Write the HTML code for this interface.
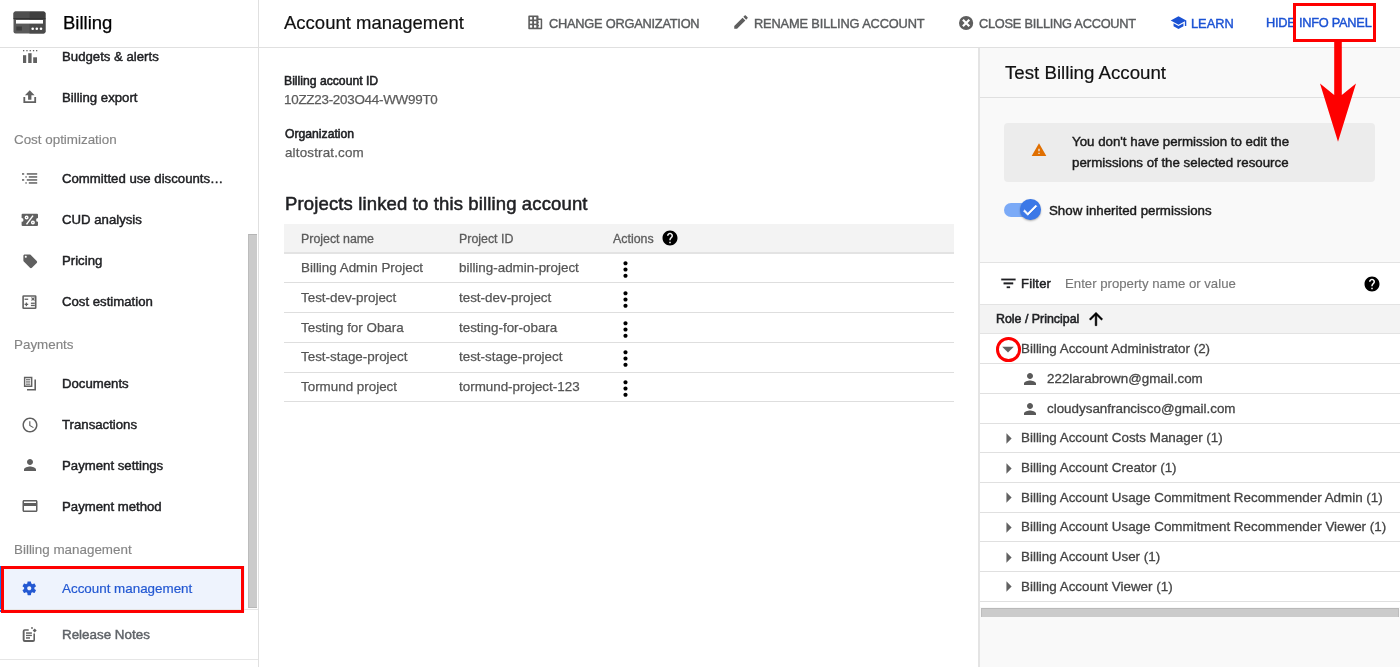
<!DOCTYPE html>
<html><head><meta charset="utf-8"><title>Billing - Account management</title>
<style>
html,body{margin:0;padding:0;}
body{width:1400px;height:667px;position:relative;overflow:hidden;background:#fff;font-family:"Liberation Sans",sans-serif;}
.t{position:absolute;white-space:nowrap;line-height:20px;-webkit-text-stroke:0.45px;will-change:transform;}
.r{position:absolute;}
.i{position:absolute;display:block;}
</style></head><body>
<div class="r" style="left:0px;top:47px;width:1400px;height:1px;background:#e0e0e0;"></div>
<div class="r" style="left:258px;top:0px;width:1px;height:667px;background:#e0e0e0;"></div>
<div class="r" style="left:979px;top:48px;width:421px;height:619px;background:#f9f9f9;"></div>
<div class="r" style="left:978px;top:48px;width:2px;height:619px;background:#e4e4e4;"></div>
<div class="r" style="left:980px;top:97px;width:420px;height:1px;background:#e0e0e0;"></div>
<svg class="i" style="left:13px;top:11px;width:33px;height:23px" viewBox="0 0 33 23">
<rect x="0.5" y="0.5" width="32" height="22" rx="2" fill="#5a5a5a"/>
<path d="M0.5 2.5a2 2 0 0 1 2-2H16.5V7.5H0.5z" fill="#4f4f4f"/>
<path d="M16.5 0.5H30.5a2 2 0 0 1 2 2V7.5H16.5z" fill="#3f3f3f"/>
<path d="M16.5 7.5H32.5V20.5a2 2 0 0 1-2 2H16.5z" fill="#4a4a4a"/>
<rect x="0.5" y="7" width="32" height="1.2" fill="#333"/><rect x="3" y="9" width="27" height="3.6" fill="#fff"/>
<rect x="3.3" y="15.5" width="5.6" height="4" fill="#3c3c3c"/>
<circle cx="19.7" cy="17.8" r="1.3" fill="#fff"/><circle cx="23.8" cy="17.8" r="1.3" fill="#fff"/><circle cx="28" cy="17.8" r="1.3" fill="#fff"/>
</svg>
<div class="t" style="left:63px;top:12.79px;font-size:18.5px;color:#000;font-weight:400;-webkit-text-stroke:0.25px">Billing</div>
<div class="t" style="left:62.0px;top:47.13px;font-size:13.2px;color:#202124;font-weight:400;">Budgets &amp; alerts</div>
<div class="t" style="left:62.0px;top:87.63px;font-size:13.2px;color:#202124;font-weight:400;">Billing export</div>
<div class="t" style="left:62.0px;top:169.13px;font-size:13.2px;color:#202124;font-weight:400;">Committed use discounts…</div>
<div class="t" style="left:62.0px;top:210.13px;font-size:13.2px;color:#202124;font-weight:400;">CUD analysis</div>
<div class="t" style="left:62.0px;top:251.13px;font-size:13.2px;color:#202124;font-weight:400;">Pricing</div>
<div class="t" style="left:62.0px;top:292.13px;font-size:13.2px;color:#202124;font-weight:400;">Cost estimation</div>
<div class="t" style="left:62.0px;top:374.13px;font-size:13.2px;color:#202124;font-weight:400;">Documents</div>
<div class="t" style="left:62.0px;top:415.13px;font-size:13.2px;color:#202124;font-weight:400;">Transactions</div>
<div class="t" style="left:62.0px;top:456.13px;font-size:13.2px;color:#202124;font-weight:400;">Payment settings</div>
<div class="t" style="left:62.0px;top:497.13px;font-size:13.2px;color:#202124;font-weight:400;">Payment method</div>
<div class="t" style="left:13.5px;top:130.46px;font-size:13.4px;color:#858585;font-weight:400;-webkit-text-stroke:0.15px">Cost optimization</div>
<div class="t" style="left:13.5px;top:335.46px;font-size:13.4px;color:#858585;font-weight:400;-webkit-text-stroke:0.15px">Payments</div>
<div class="t" style="left:13.5px;top:540.26px;font-size:13.4px;color:#858585;font-weight:400;-webkit-text-stroke:0.15px">Billing management</div>
<div class="r" style="left:0px;top:566px;width:245px;height:46px;background:#eef3fd;"></div>
<div class="r" style="left:0px;top:566px;width:3px;height:46px;background:#1a73e8;"></div>
<svg class="i" style="left:21.0px;top:579.75px;width:16.5px;height:16.5px;" viewBox="0 0 24 24"><path fill="#2358d2" d="M19.43 12.98c.04-.32.07-.64.07-.98s-.03-.66-.07-.98l2.11-1.65c.19-.15.24-.42.12-.64l-2-3.46c-.12-.22-.39-.3-.61-.22l-2.49 1c-.52-.4-1.08-.73-1.690-.98l-.38-2.65C14.46 2.18 14.25 2 14 2h-4c-.25 0-.46.18-.49.42l-.38 2.65c-.61.25-1.17.59-1.69.98l-2.49-1c-.23-.09-.49 0-.61.22l-2 3.46c-.13.22-.07.49.12.64l2.11 1.650c-.04.32-.07.65-.07.98s.03.66.07.98l-2.11 1.65c-.19.15-.24.42-.12.64l2 3.46c.12.22.39.3.61.22l2.49-1c.52.4 1.08.73 1.69.98l.38 2.65c.03.24.24.42.49.42h4c.25 0 .46-.18.49-.42l.38-2.65c.61-.25 1.17-.59 1.69-.98l2.49 1c.23.09.49 0 .61-.22l2-3.46c.12-.22.07-.49-.12-.64l-2.11-1.65zM12 15c-1.66 0-3-1.34-3-3s1.34-3 3-3 3 1.34 3 3-1.34 3-3 3z"/></svg>
<div class="t" style="left:62.2px;top:578.96px;font-size:13.4px;color:#2358d2;font-weight:400;-webkit-text-stroke:0.2px">Account management</div>
<div class="r" style="left:248px;top:234px;width:9px;height:373.5px;background:#cbcbcb;border-top:1px solid #b5b5b5;border-left:1px solid #bcbcbc;border-bottom:1px solid #b9b9b9;box-sizing:border-box"></div>
<div class="r" style="left:0px;top:609px;width:258px;height:1px;background:#e6e6e6;"></div>
<div class="t" style="left:62px;top:625.36px;font-size:13.4px;color:#5f6368;font-weight:400;">Release Notes</div>
<div class="r" style="left:0px;top:659px;width:258px;height:1px;background:#e6e6e6;"></div>
<svg class="i" style="left:20.7px;top:456.3px;width:18px;height:18px;" viewBox="0 0 24 24"><path fill="#5f5f5f" d="M12 12c2.21 0 4-1.79 4-4s-1.79-4-4-4-4 1.79-4 4 1.79 4 4 4zm0 2c-2.67 0-8 1.34-8 4v2h16v-2c0-2.66-5.33-4-8-4z"/></svg>
<svg class="i" style="left:20.7px;top:415.5px;width:18px;height:18px;" viewBox="0 0 24 24"><path fill="#5f5f5f" d="M11.99 2C6.47 2 2 6.48 2 12s4.47 10 9.99 10C17.52 22 22 17.52 22 12S17.52 2 11.99 2zM12 20c-4.42 0-8-3.58-8-8s3.58-8 8-8 8 3.58 8 8-3.58 8-8 8zm.5-13H11v6l5.25 3.15.75-1.23-4.5-2.67z"/></svg>
<svg class="i" style="left:20.5px;top:497px;width:18px;height:18px;" viewBox="0 0 24 24"><path fill="#5f5f5f" d="M20 4H4c-1.11 0-1.99.89-1.99 2L2 18c0 1.11.89 2 2 2h16c1.11 0 2-.89 2-2V6c0-1.11-.89-2-2-2zm0 14H4v-6h16v6zm0-10H4V6h16v2z"/></svg>
<svg class="i" style="left:21.5px;top:253.3px;width:16.5px;height:16.5px;" viewBox="0 0 24 24"><path fill="#5f5f5f" d="M21.41 11.58l-9-9C12.05 2.22 11.55 2 11 2H4c-1.1 0-2 .9-2 2v7c0 .55.22 1.05.59 1.42l9 9c.36.36.86.58 1.41.58.55 0 1.05-.22 1.41-.59l7-7c.37-.36.59-.86.59-1.410 0-.55-.23-1.06-.59-1.42zM5.5 7C4.67 7 4 6.330 4 5.5S4.67 4 5.5 4 7 4.67 7 5.5 6.33 7 5.5 7z"/></svg>
<svg class="i" style="left:0;top:0;width:260px;height:667px" viewBox="0 0 260 667">
<g fill="#616161">
<rect x="23" y="50" width="1.3" height="1.3"/><rect x="26.3" y="50" width="1.3" height="1.3"/><rect x="29.6" y="50" width="1.3" height="1.3"/><rect x="32.9" y="50" width="1.3" height="1.3"/><rect x="36" y="50" width="1.3" height="1.3"/>
<rect x="23" y="55.2" width="3.2" height="7.8"/><rect x="28.2" y="53.2" width="3.4" height="9.8"/><rect x="33.2" y="57.3" width="3.8" height="5.7"/>
<path d="M23.4 97h1.8v4.3h9.1V97h1.8v6H23.4z"/>
<path d="M29.75 90.3L34.6 95.2H31.4V99.8H28.1V95.2H24.9z"/>
<rect x="22" y="173.2" width="2.2" height="1.5"/><rect x="26.8" y="173.2" width="10.4" height="1.5"/>
<rect x="25.4" y="176.2" width="1.3" height="1.5"/><rect x="28.8" y="176.2" width="8.4" height="1.5"/>
<rect x="22" y="179.2" width="2.2" height="1.5"/><rect x="26.8" y="179.2" width="10.4" height="1.5"/>
<rect x="25.4" y="182.2" width="1.3" height="1.5"/><rect x="28.8" y="182.2" width="8.4" height="1.5"/>
<path d="M22.6 213.8H37a1 1 0 0 1 1 1V218A1.9 1.9 0 0 0 38 221.8V225a1 1 0 0 1-1 1H22.6a1 1 0 0 1-1-1V221.8A1.9 1.9 0 0 0 21.6 218V214.8a1 1 0 0 1 1-1z"/>
<path d="M23.6 295.2h11.6a1.3 1.3 0 0 1 1.3 1.3v11.2a1.3 1.3 0 0 1-1.3 1.3H23.6a1.3 1.3 0 0 1-1.3-1.3V296.5a1.3 1.3 0 0 1 1.3-1.3zM23.9 296.8v10.6h11V296.8z"/>
<rect x="24.6" y="298.6" width="3.6" height="1.3"/>
<path d="M31.1 297.9l.8-.8 1.1 1.1 1.1-1.1.8.8-1.1 1.1 1.1 1.1-.8.8-1.1-1.1-1.1 1.1-.8-.8 1.1-1.1z"/>
<rect x="24.6" y="303.7" width="3.6" height="1.3"/><rect x="25.75" y="302.55" width="1.3" height="3.6"/>
<rect x="30.9" y="302.6" width="3.9" height="1.3"/><rect x="30.9" y="304.8" width="3.9" height="1.3"/>
<path d="M23.9 376.8h8.5v10.2h-8.5zM25.3 378.2v7.4h5.7v-7.4z"/>
<rect x="26" y="379.2" width="4.3" height="1.1"/><rect x="26" y="381.4" width="4.3" height="1.1"/><rect x="26" y="383.6" width="4.3" height="1.1"/>
<path d="M34.4 379.4h1.6v11.1H27v-1.6h7.4z"/>
<path d="M22.7 631.2a2 2 0 0 1 2-2h4v1.6h-4.1v9.2h8.8v-6.6h1.6v6.7a2 2 0 0 1-2 2h-8.3a2 2 0 0 1-2-2z"/>
<rect x="26" y="632.3" width="5.9" height="1.5"/><rect x="26" y="634.8" width="5.9" height="1.3"/><rect x="26" y="637.2" width="4" height="1.5"/>
<path d="M34.7 628.6l2 2-2 2-2-2z"/><circle cx="32" cy="628" r="0.9"/>
</g>
<g fill="none" stroke="#fff" stroke-width="1.5"><circle cx="26.6" cy="217.6" r="1.25"/><circle cx="32.9" cy="222.4" r="1.25"/></g><path d="M33 215.6L26.5 224.4" stroke="#fff" stroke-width="1.5"/>
</svg>
<div class="t" style="left:284px;top:12.69px;font-size:18.5px;color:#111;font-weight:400;-webkit-text-stroke:0.2px">Account management</div>
<svg class="i" style="left:520px;top:8px;width:30px;height:30px" viewBox="520 8 30 30"><path fill="#5e5e5e" d="M529.1 15.4h8.6a0.8 0.8 0 0 1 .8.8V18.6h2.9a.8.8 0 0 1 .8.8V28.4a.8.8 0 0 1-.8.8H529.1a.8.8 0 0 1-.8-.8V16.2a.8.8 0 0 1 .8-.8z"/><g fill="#fff"><rect x="529.9" y="17.1" width="2.3" height="2.4"/><rect x="534" y="17.1" width="2.3" height="2.4"/><rect x="529.9" y="21.2" width="2.3" height="2.4"/><rect x="534" y="21.2" width="2.3" height="2.4"/><rect x="529.9" y="25.2" width="2.3" height="2.4"/><rect x="534" y="25.2" width="2.3" height="2.4"/><path d="M538.4 20.1H540.7V27.7H538.4V26.4L539.2 25.6L538.4 24.8V23L539.2 22.2L538.4 21.4z"/></g></svg>
<div class="t" style="left:548.5px;top:14.16px;font-size:12.8px;color:#5a5c5e;font-weight:400;-webkit-text-stroke:0.4px;letter-spacing:-0.23px">CHANGE ORGANIZATION</div>
<svg class="i" style="left:732.2px;top:13px;width:18px;height:18px;" viewBox="0 0 24 24"><path fill="#5e5e5e" d="M3 17.25V21h3.75L17.81 9.94l-3.75-3.75L3 17.25zM20.71 7.04c.39-.39.39-1.02 0-1.41l-2.34-2.34c-.39-.39-1.02-.39-1.41 0l-1.83 1.83 3.75 3.75 1.83-1.830z"/></svg>
<div class="t" style="left:754px;top:14.16px;font-size:12.8px;color:#5a5c5e;font-weight:400;-webkit-text-stroke:0.4px;letter-spacing:-0.14px">RENAME BILLING ACCOUNT</div>
<svg class="i" style="left:958px;top:14.9px;width:16px;height:16px" viewBox="0 0 16 16"><circle cx="8.1" cy="8" r="7.1" fill="#5e5e5e"/><path d="M4.9 4.8L11.3 11.2M11.3 4.8L4.9 11.2" stroke="#fff" stroke-width="2.2"/></svg>
<div class="t" style="left:978.5px;top:14.16px;font-size:12.8px;color:#5a5c5e;font-weight:400;-webkit-text-stroke:0.4px;letter-spacing:-0.25px">CLOSE BILLING ACCOUNT</div>
<svg class="i" style="left:1170px;top:14px;width:17px;height:17px;" viewBox="0 0 24 24"><path fill="#1b52d4" d="M5 13.18v4L12 21l7-3.82v-4L12 17l-7-3.82zM12 3L1 9l11 6 9-4.91V17h2V9L12 3z"/></svg>
<div class="t" style="left:1191px;top:14.16px;font-size:12.8px;color:#1b52d4;font-weight:400;-webkit-text-stroke:0.4px;">LEARN</div>
<div class="t" style="left:1265.5px;top:13.16px;font-size:12.8px;color:#1b52d4;font-weight:400;-webkit-text-stroke:0.4px;letter-spacing:-0.25px">HIDE INFO PANEL</div>
<div class="t" style="left:284px;top:71.07px;font-size:12.2px;color:#202124;font-weight:400;-webkit-text-stroke:0.55px">Billing account ID</div>
<div class="t" style="left:284px;top:89.76px;font-size:13.4px;color:#5c5c5c;font-weight:400;letter-spacing:-0.25px;-webkit-text-stroke:0.25px">10ZZ23-203O44-WW99T0</div>
<div class="t" style="left:285px;top:124.47px;font-size:12.2px;color:#202124;font-weight:400;-webkit-text-stroke:0.55px">Organization</div>
<div class="t" style="left:285px;top:142.76px;font-size:13.4px;color:#5c5c5c;font-weight:400;letter-spacing:0.17px;-webkit-text-stroke:0.25px">altostrat.com</div>
<div class="t" style="left:284.5px;top:194.09px;font-size:18.5px;color:#202124;font-weight:400;-webkit-text-stroke:0.5px;letter-spacing:0.14px">Projects linked to this billing account</div>
<div class="r" style="left:284px;top:224px;width:670px;height:29px;background:#f3f3f3;"></div>
<div class="r" style="left:284px;top:252px;width:670px;height:2px;background:#e3e3e3;"></div>
<div class="t" style="left:300.5px;top:228.90px;font-size:12.4px;color:#5c5c5c;font-weight:400;-webkit-text-stroke:0.3px">Project name</div>
<div class="t" style="left:459px;top:228.90px;font-size:12.4px;color:#5c5c5c;font-weight:400;-webkit-text-stroke:0.3px">Project ID</div>
<div class="t" style="left:612.5px;top:228.90px;font-size:12.4px;color:#5c5c5c;font-weight:400;-webkit-text-stroke:0.3px">Actions</div>
<svg class="i" style="left:661px;top:229px;width:18px;height:18px;" viewBox="0 0 24 24"><path fill="#000" d="M12 2C6.48 2 2 6.48 2 12s4.48 10 10 10 10-4.48 10-10S17.52 2 12 2zm1 17h-2v-2h2v2zm2.07-7.750l-.9.92C13.45 12.9 13 13.5 13 15h-2v-.5c0-1.1.45-2.1 1.17-2.83l1.24-1.26c.37-.36.59-.86.59-1.41 0-1.1-.9-2-2-2s-2 .9-2 2H8c0-2.21 1.79-4 4-4s4 1.79 4 4c0 .88-.36 1.68-.93 2.25z"/></svg>
<div class="t" style="left:300.5px;top:258.46px;font-size:13.4px;color:#555;font-weight:400;-webkit-text-stroke:0.25px">Billing Admin Project</div>
<div class="t" style="left:459px;top:258.46px;font-size:13.4px;color:#555;font-weight:400;-webkit-text-stroke:0.25px">billing-admin-project</div>
<svg class="i" style="left:612.6px;top:257.2px;width:25px;height:25px;" viewBox="0 0 24 24"><path fill="#000" d="M12 8c1.1 0 2-.9 2-2s-.9-2-2-2-2 .9-2 2 .9 2 2 2zm0 2c-1.1 0-2 .9-2 2s.9 2 2 2 2-.9 2-2-.9-2-2-2zm0 6c-1.1 0-2 .9-2 2s.9 2 2 2 2-.9 2-2-.9-2-2-2z"/></svg>
<div class="r" style="left:284px;top:282px;width:670px;height:1px;background:#dedede;"></div>
<div class="t" style="left:300.5px;top:288.11px;font-size:13.4px;color:#555;font-weight:400;-webkit-text-stroke:0.25px">Test-dev-project</div>
<div class="t" style="left:459px;top:288.11px;font-size:13.4px;color:#555;font-weight:400;-webkit-text-stroke:0.25px">test-dev-project</div>
<svg class="i" style="left:612.6px;top:286.84999999999997px;width:25px;height:25px;" viewBox="0 0 24 24"><path fill="#000" d="M12 8c1.1 0 2-.9 2-2s-.9-2-2-2-2 .9-2 2 .9 2 2 2zm0 2c-1.1 0-2 .9-2 2s.9 2 2 2 2-.9 2-2-.9-2-2-2zm0 6c-1.1 0-2 .9-2 2s.9 2 2 2 2-.9 2-2-.9-2-2-2z"/></svg>
<div class="r" style="left:284px;top:312px;width:670px;height:1px;background:#dedede;"></div>
<div class="t" style="left:300.5px;top:317.76px;font-size:13.4px;color:#555;font-weight:400;-webkit-text-stroke:0.25px">Testing for Obara</div>
<div class="t" style="left:459px;top:317.76px;font-size:13.4px;color:#555;font-weight:400;-webkit-text-stroke:0.25px">testing-for-obara</div>
<svg class="i" style="left:612.6px;top:316.5px;width:25px;height:25px;" viewBox="0 0 24 24"><path fill="#000" d="M12 8c1.1 0 2-.9 2-2s-.9-2-2-2-2 .9-2 2 .9 2 2 2zm0 2c-1.1 0-2 .9-2 2s.9 2 2 2 2-.9 2-2-.9-2-2-2zm0 6c-1.1 0-2 .9-2 2s.9 2 2 2 2-.9 2-2-.9-2-2-2z"/></svg>
<div class="r" style="left:284px;top:342px;width:670px;height:1px;background:#dedede;"></div>
<div class="t" style="left:300.5px;top:347.41px;font-size:13.4px;color:#555;font-weight:400;-webkit-text-stroke:0.25px">Test-stage-project</div>
<div class="t" style="left:459px;top:347.41px;font-size:13.4px;color:#555;font-weight:400;-webkit-text-stroke:0.25px">test-stage-project</div>
<svg class="i" style="left:612.6px;top:346.15px;width:25px;height:25px;" viewBox="0 0 24 24"><path fill="#000" d="M12 8c1.1 0 2-.9 2-2s-.9-2-2-2-2 .9-2 2 .9 2 2 2zm0 2c-1.1 0-2 .9-2 2s.9 2 2 2 2-.9 2-2-.9-2-2-2zm0 6c-1.1 0-2 .9-2 2s.9 2 2 2 2-.9 2-2-.9-2-2-2z"/></svg>
<div class="r" style="left:284px;top:372px;width:670px;height:1px;background:#dedede;"></div>
<div class="t" style="left:300.5px;top:377.06px;font-size:13.4px;color:#555;font-weight:400;-webkit-text-stroke:0.25px">Tormund project</div>
<div class="t" style="left:459px;top:377.06px;font-size:13.4px;color:#555;font-weight:400;-webkit-text-stroke:0.25px">tormund-project-123</div>
<svg class="i" style="left:612.6px;top:375.8px;width:25px;height:25px;" viewBox="0 0 24 24"><path fill="#000" d="M12 8c1.1 0 2-.9 2-2s-.9-2-2-2-2 .9-2 2 .9 2 2 2zm0 2c-1.1 0-2 .9-2 2s.9 2 2 2 2-.9 2-2-.9-2-2-2zm0 6c-1.1 0-2 .9-2 2s.9 2 2 2 2-.9 2-2-.9-2-2-2z"/></svg>
<div class="r" style="left:284px;top:401px;width:670px;height:1px;background:#dedede;"></div>
<div class="t" style="left:1004.5px;top:63.02px;font-size:18.7px;color:#111;font-weight:400;-webkit-text-stroke:0.2px">Test Billing Account</div>
<div class="r" style="left:1004px;top:122.8px;width:371px;height:58.8px;background:#ececec;border-radius:4px"></div>
<svg class="i" style="left:1031.1px;top:141.6px;width:16px;height:16px;" viewBox="0 0 24 24"><path fill="#e06f00" d="M1 21h22L12 2 1 21zm12-3h-2v-2h2v2zm0-4h-2v-4h2v4z"/></svg>
<div class="t" style="left:1072px;top:132.49px;font-size:13.3px;color:#1c1c1c;font-weight:400;">You don't have permission to edit the</div>
<div class="t" style="left:1072px;top:153.39px;font-size:13.3px;color:#1c1c1c;font-weight:400;">permissions of the selected resource</div>
<div class="r" style="left:1004px;top:203px;width:28px;height:14px;background:#7baaf7;border-radius:7px"></div>
<div class="r" style="left:1020.3px;top:199.3px;width:20.7px;height:20.7px;border-radius:50%;background:#3b78e7;box-shadow:0 1px 2px rgba(0,0,0,.3)"></div>
<svg class="i" style="left:1021.3px;top:200.5px;width:18px;height:18px" viewBox="0 0 24 24"><path fill="#fff" stroke="#fff" stroke-width="1" d="M9 16.17L4.83 12l-1.42 1.41L9 19 21 7l-1.41-1.41z"/></svg>
<div class="t" style="left:1048.7px;top:201.39px;font-size:13.3px;color:#1c1c1c;font-weight:400;">Show inherited permissions</div>
<div class="r" style="left:980px;top:262px;width:420px;height:345px;background:#fff;"></div>
<div class="r" style="left:980px;top:262px;width:420px;height:1px;background:#e3e3e3;"></div>
<svg class="i" style="left:998.6px;top:273.6px;width:18.8px;height:18.8px;overflow:visible" viewBox="0 0 24 24"><path fill="#202124" stroke="#202124" stroke-width="0.35" d="M10 18h4v-2h-4v2zM3 6v2h18V6H3zm3 7h12v-2H6v2z"/></svg>
<div class="t" style="left:1021.4px;top:274.10px;font-size:13px;color:#202124;font-weight:400;-webkit-text-stroke:0.45px;letter-spacing:0.2px">Filter</div>
<div class="t" style="left:1065px;top:274.03px;font-size:13.2px;color:#787878;font-weight:400;-webkit-text-stroke:0.15px">Enter property name or value</div>
<svg class="i" style="left:1362.5px;top:274.5px;width:18px;height:18px;" viewBox="0 0 24 24"><path fill="#000" d="M12 2C6.48 2 2 6.48 2 12s4.48 10 10 10 10-4.48 10-10S17.52 2 12 2zm1 17h-2v-2h2v2zm2.07-7.750l-.9.92C13.45 12.9 13 13.5 13 15h-2v-.5c0-1.1.45-2.1 1.17-2.83l1.24-1.26c.37-.36.59-.86.59-1.41 0-1.1-.9-2-2-2s-2 .9-2 2H8c0-2.21 1.79-4 4-4s4 1.79 4 4c0 .88-.36 1.68-.93 2.25z"/></svg>
<div class="r" style="left:980px;top:304px;width:420px;height:1px;background:#e3e3e3;"></div>
<div class="r" style="left:980px;top:305px;width:420px;height:29px;background:#f3f3f3;"></div>
<div class="r" style="left:980px;top:333px;width:420px;height:1px;background:#e3e3e3;"></div>
<div class="t" style="left:996px;top:309.10px;font-size:12.4px;color:#202124;font-weight:400;-webkit-text-stroke:0.55px">Role / Principal</div>
<svg class="i" style="left:1086px;top:309.1px;width:20px;height:20px;" viewBox="0 0 24 24"><path fill="#000" stroke="#000" stroke-width="0.6" d="M4 12l1.41 1.41L11 7.83V20h2V7.83l5.58 5.59L20 12l-8-8-8 8z"/></svg>
<svg class="i" style="left:994.05px;top:334.8px;width:28px;height:28px;" viewBox="0 0 24 24"><path fill="#616161" d="M7 10l5 5 5-5z"/></svg>
<div class="t" style="left:1020.5px;top:339.46px;font-size:13.4px;color:#444;font-weight:400;-webkit-text-stroke:0.3px">Billing Account Administrator (2)</div>
<div class="r" style="left:980px;top:363px;width:420px;height:1px;background:#e0e0e0;"></div>
<svg class="i" style="left:1020.5px;top:370.15px;width:18px;height:18px;" viewBox="0 0 24 24"><path fill="#595959" d="M12 12c2.21 0 4-1.79 4-4s-1.79-4-4-4-4 1.79-4 4 1.79 4 4 4zm0 2c-2.67 0-8 1.34-8 4v2h16v-2c0-2.66-5.33-4-8-4z"/></svg>
<div class="t" style="left:1047px;top:369.11px;font-size:13.4px;color:#444;font-weight:400;-webkit-text-stroke:0.3px">222larabrown@gmail.com</div>
<div class="r" style="left:980px;top:393px;width:420px;height:1px;background:#e0e0e0;"></div>
<svg class="i" style="left:1020.5px;top:399.8px;width:18px;height:18px;" viewBox="0 0 24 24"><path fill="#595959" d="M12 12c2.21 0 4-1.79 4-4s-1.79-4-4-4-4 1.79-4 4 1.79 4 4 4zm0 2c-2.67 0-8 1.34-8 4v2h16v-2c0-2.66-5.33-4-8-4z"/></svg>
<div class="t" style="left:1047px;top:398.76px;font-size:13.4px;color:#444;font-weight:400;-webkit-text-stroke:0.3px">cloudysanfrancisco@gmail.com</div>
<div class="r" style="left:980px;top:423px;width:420px;height:1px;background:#e0e0e0;"></div>
<svg class="i" style="left:995.7px;top:425.95px;width:25px;height:25px;" viewBox="0 0 24 24"><path fill="#616161" d="M10 17l5-5-5-5v10z"/></svg>
<div class="t" style="left:1020.5px;top:428.41px;font-size:13.4px;color:#444;font-weight:400;-webkit-text-stroke:0.3px">Billing Account Costs Manager (1)</div>
<div class="r" style="left:980px;top:452px;width:420px;height:1px;background:#e0e0e0;"></div>
<svg class="i" style="left:995.7px;top:455.6px;width:25px;height:25px;" viewBox="0 0 24 24"><path fill="#616161" d="M10 17l5-5-5-5v10z"/></svg>
<div class="t" style="left:1020.5px;top:458.06px;font-size:13.4px;color:#444;font-weight:400;-webkit-text-stroke:0.3px">Billing Account Creator (1)</div>
<div class="r" style="left:980px;top:482px;width:420px;height:1px;background:#e0e0e0;"></div>
<svg class="i" style="left:995.7px;top:485.25px;width:25px;height:25px;" viewBox="0 0 24 24"><path fill="#616161" d="M10 17l5-5-5-5v10z"/></svg>
<div class="t" style="left:1020.5px;top:487.71px;font-size:13.4px;color:#444;font-weight:400;-webkit-text-stroke:0.3px">Billing Account Usage Commitment Recommender Admin (1)</div>
<div class="r" style="left:980px;top:512px;width:420px;height:1px;background:#e0e0e0;"></div>
<svg class="i" style="left:995.7px;top:514.9px;width:25px;height:25px;" viewBox="0 0 24 24"><path fill="#616161" d="M10 17l5-5-5-5v10z"/></svg>
<div class="t" style="left:1020.5px;top:517.36px;font-size:13.4px;color:#444;font-weight:400;-webkit-text-stroke:0.3px">Billing Account Usage Commitment Recommender Viewer (1)</div>
<div class="r" style="left:980px;top:541px;width:420px;height:1px;background:#e0e0e0;"></div>
<svg class="i" style="left:995.7px;top:544.55px;width:25px;height:25px;" viewBox="0 0 24 24"><path fill="#616161" d="M10 17l5-5-5-5v10z"/></svg>
<div class="t" style="left:1020.5px;top:547.01px;font-size:13.4px;color:#444;font-weight:400;-webkit-text-stroke:0.3px">Billing Account User (1)</div>
<div class="r" style="left:980px;top:571px;width:420px;height:1px;background:#e0e0e0;"></div>
<svg class="i" style="left:995.7px;top:574.2px;width:25px;height:25px;" viewBox="0 0 24 24"><path fill="#616161" d="M10 17l5-5-5-5v10z"/></svg>
<div class="t" style="left:1020.5px;top:576.66px;font-size:13.4px;color:#444;font-weight:400;-webkit-text-stroke:0.3px">Billing Account Viewer (1)</div>
<div class="r" style="left:980px;top:601px;width:420px;height:1px;background:#e0e0e0;"></div>
<div class="r" style="left:995.9px;top:337.1px;width:18.7px;height:18.7px;border:3px solid #fe0000;border-radius:50%"></div>
<div class="r" style="left:980.5px;top:607.5px;width:418.5px;height:9px;background:#cbcbcb;border-top:1px solid #b9b9b9;border-right:1px solid #bdbdbd;border-left:1px solid #bdbdbd;box-sizing:border-box"></div>
<div class="r" style="left:1px;top:566px;width:237px;height:41px;border:3px solid #fe0000"></div>
<div class="r" style="left:1293px;top:3px;width:77px;height:33px;border:3px solid #fe0000"></div>
<svg class="i" style="left:0;top:0;width:1400px;height:667px" viewBox="0 0 1400 667"><polygon fill="#fe0000" points="1334.2,41 1341.8,41 1341.8,95 1356,83.6 1338,141.7 1320,83.6 1334.2,95"/></svg>
</body></html>
